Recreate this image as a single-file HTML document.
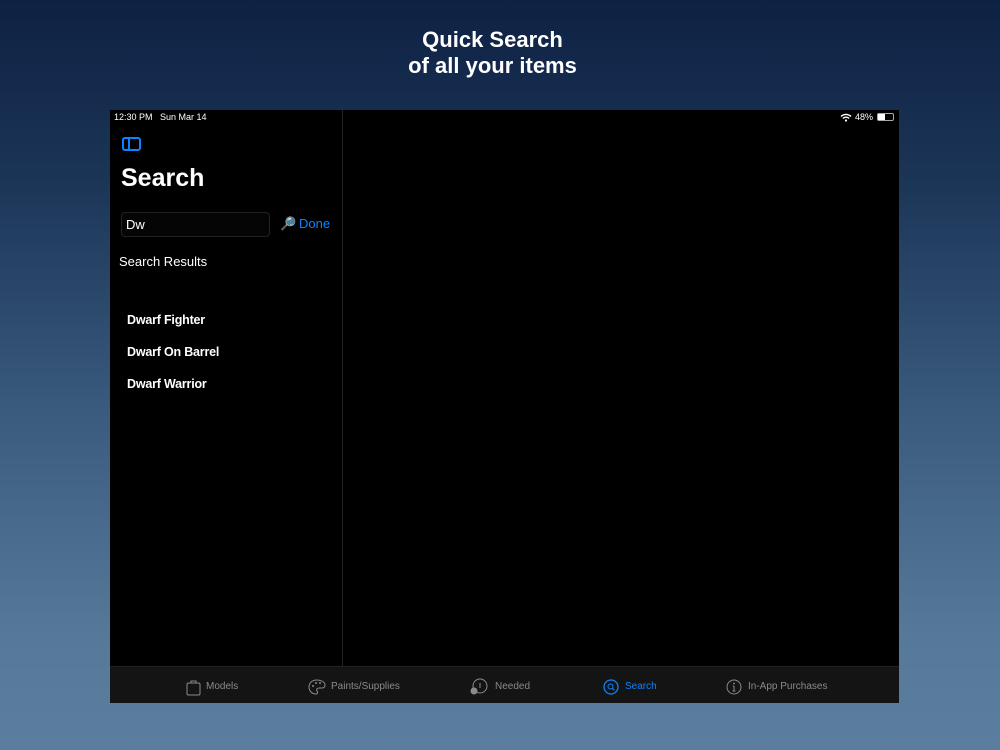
<!DOCTYPE html>
<html><head><meta charset="utf-8"><style>
*{margin:0;padding:0;box-sizing:border-box}
body{width:1000px;height:750px;overflow:hidden;font-family:"Liberation Sans",sans-serif;background:linear-gradient(180deg,#0e2143 0%,#1c3658 25%,#3a5b7e 55%,#56799a 85%,#5b7e9e 100%);position:relative}
.h{position:absolute;left:0;width:985px;text-align:center;color:#fff;font-weight:bold;font-size:22px}
.dev{position:absolute;left:110px;top:110px;width:789px;height:593px;background:#000}
.side{position:absolute;left:0;top:0;width:233px;height:556px;border-right:1px solid #222}
.t{position:absolute;color:#fff}
.tab{position:absolute;left:0;top:556px;width:789px;height:37px;background:#141414;border-top:1px solid #222}
.ti{position:absolute;top:14px;font-size:10px;color:#8a8a8a}
</style></head><body>
<div class="h" style="top:27px">Quick Search</div>
<div class="h" style="top:53px">of all your items</div>
<div class="dev">
<div class="t" style="left:4px;top:2px;font-size:9px">12:30 PM&nbsp;&nbsp;&nbsp;Sun Mar 14</div>
<div class="t" style="left:745px;top:2px;font-size:9px">48%</div>
<svg style="position:absolute;left:730px;top:3px" width="12" height="9" viewBox="0 0 12 9"><path d="M1 3.5a7 7 0 0 1 10 0M3 5.5a4 4 0 0 1 6 0" stroke="#fff" stroke-width="1.4" fill="none"/><circle cx="6" cy="7.5" r="1.1" fill="#fff"/></svg>
<div style="position:absolute;left:767px;top:3px;width:17px;height:8px;border:1px solid #aaa;border-radius:2px"><div style="width:7px;height:6px;background:#fff;margin:0"></div></div>
<div class="side">
<div style="position:absolute;left:12px;top:27px;width:19px;height:14px;border:2px solid #0a84ff;border-radius:3px"><div style="position:absolute;left:4px;top:0;width:1.5px;height:10px;background:#0a84ff"></div></div>
<div class="t" style="left:11px;top:54px;font-size:25px;font-weight:bold">Search</div>
<div style="position:absolute;left:11px;top:102px;width:149px;height:25px;border:1px solid #222;border-radius:4px;background:#050505"></div>
<div class="t" style="left:16px;top:107px;font-size:13px">Dw</div>
<div style="position:absolute;left:170px;top:106px;font-size:13px">🔎</div>
<div class="t" style="left:189px;top:106px;font-size:13px;color:#0a84ff">Done</div>
<div class="t" style="left:9px;top:144px;font-size:13px">Search Results</div>
<div class="t" style="left:17px;top:203px;font-size:12.5px;font-weight:bold;letter-spacing:-0.2px">Dwarf Fighter</div>
<div class="t" style="left:17px;top:235px;font-size:12.5px;font-weight:bold;letter-spacing:-0.2px">Dwarf On Barrel</div>
<div class="t" style="left:17px;top:267px;font-size:12.5px;font-weight:bold;letter-spacing:-0.2px">Dwarf Warrior</div>
</div>
<div class="tab">
<svg style="position:absolute;left:76px;top:12px" width="15" height="17" viewBox="0 0 15 17"><rect x="1" y="4" width="13" height="12" rx="1.5" stroke="#8a8a8a" fill="none"/><path d="M5 4V2h5v2" stroke="#8a8a8a" fill="none"/></svg>
<div class="ti" style="left:96px">Models</div>
<svg style="position:absolute;left:198px;top:12px" width="18" height="16" viewBox="0 0 18 16"><path d="M9 1C4 1 1 4 1 8s3 7 7 7c2 0 2-2 1-3s0-3 2-3h3c2 0 3-1 3-3C17 3 13 1 9 1z" stroke="#8a8a8a" fill="none"/><circle cx="5" cy="7" r="1" fill="#8a8a8a"/><circle cx="8" cy="4" r="1" fill="#8a8a8a"/><circle cx="12" cy="4" r="1" fill="#8a8a8a"/></svg>
<div class="ti" style="left:221px">Paints/Supplies</div>
<svg style="position:absolute;left:360px;top:11px" width="18" height="17" viewBox="0 0 18 17"><circle cx="10" cy="8" r="7" stroke="#8a8a8a" fill="none"/><path d="M10 5v5" stroke="#8a8a8a"/><circle cx="4" cy="13" r="3.5" fill="#8a8a8a"/></svg>
<div class="ti" style="left:385px">Needed</div>
<svg style="position:absolute;left:493px;top:12px" width="16" height="16" viewBox="0 0 16 16"><circle cx="8" cy="8" r="7" stroke="#0a84ff" stroke-width="1.3" fill="none"/><circle cx="7.5" cy="7.5" r="2.5" stroke="#0a84ff" fill="none"/><path d="M9.3 9.3l2 2" stroke="#0a84ff" stroke-width="1.3"/></svg>
<div class="ti" style="left:515px;color:#0a84ff">Search</div>
<svg style="position:absolute;left:616px;top:12px" width="16" height="16" viewBox="0 0 16 16"><circle cx="8" cy="8" r="7" stroke="#8a8a8a" fill="none"/><path d="M8 7v5M6.5 12h3M6.8 7H8" stroke="#8a8a8a"/><circle cx="8" cy="4.5" r=".9" fill="#8a8a8a"/></svg>
<div class="ti" style="left:638px">In-App Purchases</div>
</div>
</div>
</body></html>
